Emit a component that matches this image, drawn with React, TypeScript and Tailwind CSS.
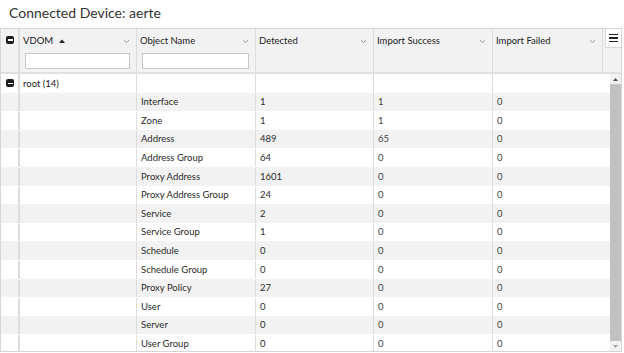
import React from "react";

const rows = [
  ["Interface", "1", "1", "0"],
  ["Zone", "1", "1", "0"],
  ["Address", "489", "65", "0"],
  ["Address Group", "64", "0", "0"],
  ["Proxy Address", "1601", "0", "0"],
  ["Proxy Address Group", "24", "0", "0"],
  ["Service", "2", "0", "0"],
  ["Service Group", "1", "0", "0"],
  ["Schedule", "0", "0", "0"],
  ["Schedule Group", "0", "0", "0"],
  ["Proxy Policy", "27", "0", "0"],
  ["User", "0", "0", "0"],
  ["Server", "0", "0", "0"],
  ["User Group", "0", "0", "0"],
];

function Collapse() {
  return (
    <span className="flex w-[8px] h-[8px] items-center justify-center rounded-[2px] bg-[#1e1e1e]">
      <span className="block w-[5px] h-[1.5px] bg-white" />
    </span>
  );
}

function Chevron() {
  return (
    <svg width="7" height="5" viewBox="0 0 7 5" className="shrink-0">
      <path d="M1 1.2 L3.5 3.6 L6 1.2" fill="none" stroke="#9a9a9a" strokeWidth="1" />
    </svg>
  );
}

function HeadCell({ label, w, sort, filter }: { label: string; w: string; sort?: boolean; filter?: boolean }) {
  return (
    <div className={`${w} shrink-0 flex flex-col border-r border-[#dcdcdc]`}>
      <div className="flex items-center h-[22px] pl-[3px] pr-[6px] pt-[2px]">
        <span className="text-[9.5px] text-[#1a1a1a]">{label}</span>
        {sort && (
          <svg width="6" height="4" viewBox="0 0 6 4" className="ml-[6px]">
            <path d="M0 4 L3 0.5 L6 4 Z" fill="#222" />
          </svg>
        )}
        <span className="flex-1" />
        <Chevron />
      </div>
      {filter && (
        <div className="pl-[5px] pr-[6px] pt-[2px]">
          <div className="h-[16px] bg-white border border-[#c8c8c8]" />
        </div>
      )}
    </div>
  );
}

const cols = ["w-[117px]", "w-[119px]", "w-[118px]", "w-[119px]"];

export default function App() {
  return (
    <div className="w-[624px] h-[353px] bg-white font-['Lato',sans-serif] text-[#333] overflow-hidden">
      <div className="h-[28px] pl-[9px] pt-[4px] text-[14px] leading-[17px] text-[#333]">
        Connected Device: aerte
      </div>
      <div className="w-[622px] h-[324px] border border-[#d6d6d6] flex flex-col overflow-hidden">
        {/* header */}
        <div className="flex h-[45px] shrink-0 bg-[#f2f2f2] border-b-2 border-[#e0e0e0]">
          <div className="w-[19px] shrink-0 border-r-2 border-[#dcdcdc] flex justify-center pt-[7px] pl-[1px]">
            <Collapse />
          </div>
          <HeadCell label="VDOM" w="w-[117px]" sort filter />
          <HeadCell label="Object Name" w="w-[119px]" filter />
          <HeadCell label="Detected" w="w-[118px]" />
          <HeadCell label="Import Success" w="w-[119px]" />
          <HeadCell label="Import Failed" w="w-[110px]" />
          <div className="flex-1 flex flex-col">
            <div className="h-[19px] ml-[2px] bg-white border-l border-b border-[#dcdcdc] flex flex-col items-center justify-center gap-[2px]">
              <span className="block w-[9px] h-[1.5px] bg-[#222]" />
              <span className="block w-[9px] h-[1.5px] bg-[#222]" />
              <span className="block w-[9px] h-[1.5px] bg-[#222]" />
            </div>
          </div>
        </div>
        {/* body */}
        <div className="flex flex-1 overflow-hidden">
          <div className="w-[609px] shrink-0 flex flex-col text-[9.5px]">
            <div className="flex h-[18.6px] shrink-0 bg-white">
              <div className="w-[19px] shrink-0 border-r-2 border-[#dcdcdc] flex items-center justify-center pl-[1px]">
                <Collapse />
              </div>
              <div className="w-[117px] shrink-0 border-r border-[#dcdcdc] flex items-center pl-[3px] pt-[1px] text-[#1a1a1a]">
                root (14)
              </div>
              <div className="w-[119px] shrink-0 border-r border-[#dcdcdc]" />
              <div className="w-[118px] shrink-0 border-r border-[#dcdcdc]" />
              <div className="w-[119px] shrink-0 border-r border-[#dcdcdc]" />
              <div className="flex-1" />
            </div>
            {rows.map((r, i) => (
              <div key={r[0]} className={`flex h-[18.6px] shrink-0 pt-[1px] ${i % 2 === 0 ? "bg-[#f2f2f2]" : "bg-white"}`}>
                <div className="w-[19px] shrink-0 border-r-2 border-[#dcdcdc]" />
                <div className="w-[117px] shrink-0 border-r border-[#dcdcdc]" />
                <div className={`${cols[1]} shrink-0 border-r border-[#dcdcdc] flex items-center pl-[4px] text-[#2a2a2a]`}>{r[0]}</div>
                <div className={`${cols[2]} shrink-0 border-r border-[#dcdcdc] flex items-center pl-[4px] text-[#2a2a2a]`}>{r[1]}</div>
                <div className={`${cols[3]} shrink-0 border-r border-[#dcdcdc] flex items-center pl-[4px] text-[#444]`}>{r[2]}</div>
                <div className="flex-1 flex items-center pl-[4px] text-[#444]">{r[3]}</div>
              </div>
            ))}
          </div>
          {/* scrollbar */}
          <div className="flex-1 bg-[#f1f1f1] flex flex-col items-center">
            <div className="h-[10px] flex items-center justify-center">
              <svg width="5" height="3" viewBox="0 0 5 3">
                <path d="M0 3 L2.5 0 L5 3 Z" fill="#505050" />
              </svg>
            </div>
            <div className="w-full flex-1 bg-[#c1c1c1]" />
            <div className="h-[10px] flex items-center justify-center">
              <svg width="5" height="3" viewBox="0 0 5 3">
                <path d="M0 0 L2.5 3 L5 0 Z" fill="#a3a3a3" />
              </svg>
            </div>
          </div>
        </div>
      </div>
    </div>
  );
}
